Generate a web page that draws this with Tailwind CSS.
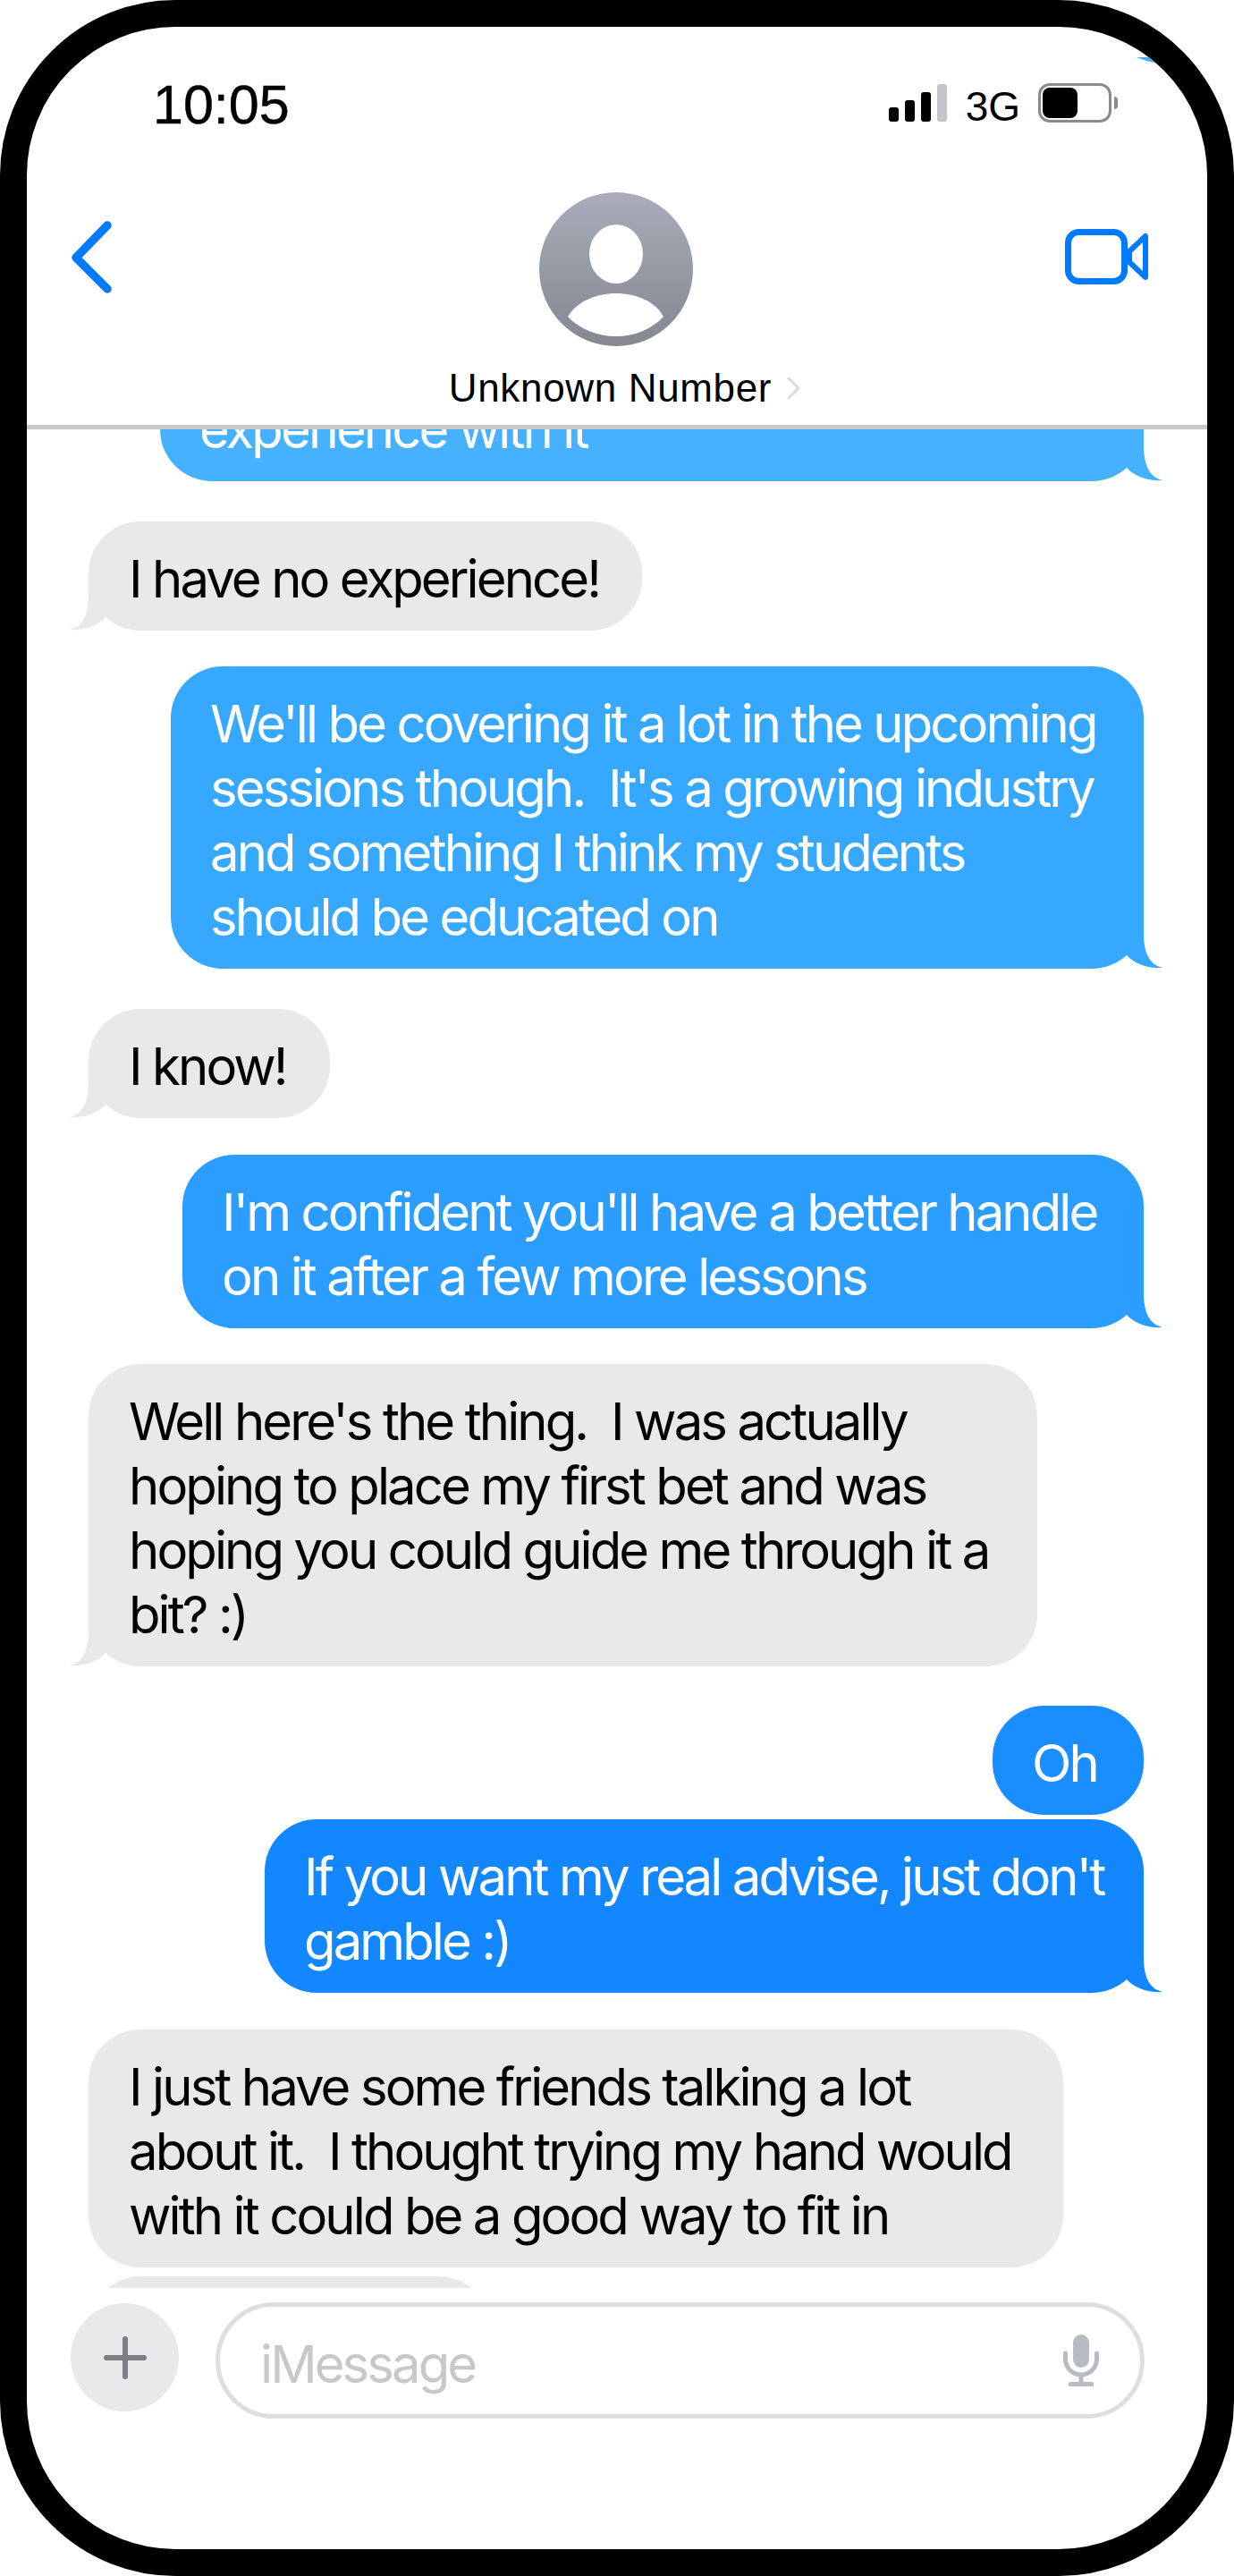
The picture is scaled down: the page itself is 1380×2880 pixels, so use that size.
<!DOCTYPE html>
<html lang="en">
  <head>
    <meta charset="UTF-8" />
    <title>Messages</title>
    <script src="https://cdn.jsdelivr.net/npm/@tailwindcss/browser@4"></script>
  </head>

  <body class="bg-white">
    <div class="relative w-[1380px] h-[2880px] border-[30px] border-black rounded-[196px] bg-white overflow-hidden flex flex-col font-['Inter',sans-serif] text-black">
      <!-- stray tail left over in the top corner -->
      <svg class="absolute left-[1241px] top-[34px] w-[29px] h-[6px]" viewBox="0 0 29 6"><path d="M0 0H29L20 6C13 5 6 2 0 0Z" fill="#45B1FF" /></svg>

      <!-- status bar -->
      <div class="h-[110px] pt-[52px] pl-[141px] pr-[100px] flex justify-between items-start shrink-0">
        <span class="font-['Liberation_Sans',sans-serif] text-[61px] leading-[70px] [-webkit-text-stroke:0.5px_black]">10:05</span>
        <div class="flex items-start">
          <div class="flex items-end gap-[7px] h-[42px] mt-[12px]">
            <div class="w-[11px] h-[16px] rounded-[3px] bg-black"></div>
            <div class="w-[11px] h-[24px] rounded-[3px] bg-black"></div>
            <div class="w-[11px] h-[33px] rounded-[3px] bg-black"></div>
            <div class="w-[11px] h-[42px] rounded-[3px] bg-[#c4c4c8]"></div>
          </div>
          <span class="font-['Liberation_Sans',sans-serif] text-[46px] leading-[52px] ml-[21px] mt-[11px]">3G</span>
          <div class="ml-[20px] mt-[11px] w-[82px] h-[44px] border-[3px] border-[#8a8a8a] rounded-[13px] p-[2px]">
            <div class="w-[39px] h-[34px] bg-black rounded-[8px]"></div>
          </div>
          <div class="ml-[3px] mt-[26px] w-[4px] h-[14px] bg-[#8a8a8a] rounded-r-full"></div>
        </div>
      </div>

      <!-- conversation header -->
      <div class="relative h-[335px] shrink-0 flex flex-col items-center">
        <svg class="absolute left-[47px] top-[105px] w-[52px] h-[86px]" viewBox="0 0 52 86" fill="none">
          <path d="M43 7L8 43L43 78" stroke="#007AFF" stroke-width="9.5" stroke-linecap="round" stroke-linejoin="round" />
        </svg>
        <svg class="mt-[75px] -ml-[2px] w-[172px] h-[172px]" viewBox="0 0 172 172">
          <defs>
            <linearGradient id="avatar" x1="0" y1="0" x2="0" y2="1">
              <stop offset="0" stop-color="#a9adb9" />
              <stop offset="1" stop-color="#858791" />
            </linearGradient>
          </defs>
          <circle cx="86" cy="86" r="86" fill="url(#avatar)" />
          <ellipse cx="86" cy="69" rx="30" ry="33" fill="#fff" />
          <path d="M32 139C42 122 64 113 86 113C108 113 130 122 139 139C126 153 107 161 86 161C65 161 45 153 32 139Z" fill="#fff" />
        </svg>
        <div class="mt-[22px] ml-[18px] flex items-center">
          <span class="font-['Liberation_Sans',sans-serif] text-[44px] leading-[50px] tracking-[0.015em]">Unknown Number</span>
          <svg class="ml-[16px] w-[17px] h-[28px]" viewBox="0 0 17 28" fill="none"><path d="M2 2L14 14L2 26" stroke="#dcdcdc" stroke-width="3" /></svg>
        </div>
        <svg class="absolute left-[1161px] top-[116px] w-[94px] h-[62px]" viewBox="0 0 94 62" fill="none" stroke="#007AFF" stroke-width="7" stroke-linejoin="round">
          <rect x="3.5" y="3.5" width="63" height="55" rx="12" />
          <path d="M72 25L90 8V54L72 37Z" stroke-width="6" />
        </svg>
      </div>

      <div class="h-[5px] bg-[#c8c8c8] shrink-0"></div>

      <!-- messages -->
      <div class="h-[2078px] shrink-0 overflow-hidden pl-[69px] pr-[71px] flex flex-col text-[58px] leading-[72px] tracking-[-0.05em]">
        <div class="relative self-end w-[1100px] -mt-[64px] pl-[44px] pt-[28px] pb-[22px] rounded-[58px] bg-[#45B1FF] text-white">
          <span class="whitespace-pre">experience with it</span>
          <svg class="absolute -right-[21px] bottom-0 w-[44px] h-[60px]" viewBox="0 0 44 60"><path d="M23 0V20C23 40 28 55 44 59C30 60 14 56 4 45L0 0Z" fill="#45B1FF" /></svg>
        </div>

        <div class="relative self-start w-[619px] mt-[45px] pl-[45px] pt-[28px] pb-[22px] rounded-[58px] bg-[#E9E9EB]">
          <span class="whitespace-pre">I have no experience!</span>
          <svg class="absolute -left-[21px] bottom-0 w-[44px] h-[60px] -scale-x-100" viewBox="0 0 44 60"><path d="M23 0V20C23 40 28 55 44 59C30 60 14 56 4 45L0 0Z" fill="#E9E9EB" /></svg>
        </div>

        <div class="relative self-end w-[1088px] mt-[40px] pl-[44px] pt-[28px] pb-[22px] rounded-[58px] bg-[#36A8FF] text-white">
          <span class="whitespace-pre">We'll be covering it a lot in the upcoming<br />sessions though.  It's a growing industry<br />and something I think my students<br />should be educated on</span>
          <svg class="absolute -right-[21px] bottom-0 w-[44px] h-[60px]" viewBox="0 0 44 60"><path d="M23 0V20C23 40 28 55 44 59C30 60 14 56 4 45L0 0Z" fill="#36A8FF" /></svg>
        </div>

        <div class="relative self-start w-[270px] mt-[45px] pl-[45px] pt-[28px] pb-[22px] rounded-[58px] bg-[#E9E9EB]">
          <span class="whitespace-pre">I know!</span>
          <svg class="absolute -left-[21px] bottom-0 w-[44px] h-[60px] -scale-x-100" viewBox="0 0 44 60"><path d="M23 0V20C23 40 28 55 44 59C30 60 14 56 4 45L0 0Z" fill="#E9E9EB" /></svg>
        </div>

        <div class="relative self-end w-[1075px] mt-[41px] pl-[44px] pt-[28px] pb-[22px] rounded-[58px] bg-[#2A9DFF] text-white">
          <span class="whitespace-pre">I'm confident you'll have a better handle<br />on it after a few more lessons</span>
          <svg class="absolute -right-[21px] bottom-0 w-[44px] h-[60px]" viewBox="0 0 44 60"><path d="M23 0V20C23 40 28 55 44 59C30 60 14 56 4 45L0 0Z" fill="#2A9DFF" /></svg>
        </div>

        <div class="relative self-start w-[1061px] mt-[40px] pl-[45px] pt-[28px] pb-[22px] rounded-[58px] bg-[#E9E9EB]">
          <span class="whitespace-pre">Well here's the thing.  I was actually<br />hoping to place my first bet and was<br />hoping you could guide me through it a<br />bit? :)</span>
          <svg class="absolute -left-[21px] bottom-0 w-[44px] h-[60px] -scale-x-100" viewBox="0 0 44 60"><path d="M23 0V20C23 40 28 55 44 59C30 60 14 56 4 45L0 0Z" fill="#E9E9EB" /></svg>
        </div>

        <div class="self-end w-[169px] mt-[44px] pl-[44px] pt-[28px] pb-[22px] rounded-[58px] bg-[#1A8DFF] text-white">
          <span class="whitespace-pre">Oh</span>
        </div>

        <div class="relative self-end w-[983px] mt-[5px] pl-[44px] pt-[28px] pb-[22px] rounded-[58px] bg-[#1287FF] text-white">
          <span class="whitespace-pre">If you want my real advise, just don't<br />gamble :)</span>
          <svg class="absolute -right-[21px] bottom-0 w-[44px] h-[60px]" viewBox="0 0 44 60"><path d="M23 0V20C23 40 28 55 44 59C30 60 14 56 4 45L0 0Z" fill="#1287FF" /></svg>
        </div>

        <div class="self-start w-[1090px] mt-[41px] pl-[45px] pt-[28px] pb-[22px] rounded-[58px] bg-[#E9E9EB]">
          <span class="whitespace-pre">I just have some friends talking a lot<br />about it.  I thought trying my hand would<br />with it could be a good way to fit in</span>
        </div>

        <div class="self-start w-[450px] h-[122px] shrink-0 mt-[10px] rounded-[58px] bg-[#E9E9EB]"></div>
      </div>

      <!-- composer -->
      <div class="flex items-start pl-[49px] pr-[70px] pt-[16px]">
        <div class="w-[121px] h-[121px] rounded-full bg-[#E9E9EB] flex items-center justify-center shrink-0 mt-[1px]">
          <svg class="w-[48px] h-[48px]" viewBox="0 0 48 48" stroke="#7E7F85" stroke-width="6" stroke-linecap="round"><path d="M3 24H45M24 3V45" /></svg>
        </div>
        <div class="ml-[41px] flex-1 h-[130px] border-[5px] border-[#DEDEDE] rounded-full pl-[45px] pr-[46px] flex items-center justify-between">
          <span class="text-[58px] leading-[72px] tracking-[-0.05em] text-[#C8C8CC] mt-[8px]">iMessage</span>
          <svg class="w-[40px] h-[58px]" viewBox="0 0 40 58" fill="none" stroke="#B8BAC4">
            <rect x="11" y="0" width="18" height="37" rx="9" fill="#B8BAC4" stroke="none" />
            <path d="M2.5 21V27C2.5 37 10 45 20 45C30 45 37.5 37 37.5 27V21" stroke-width="5" stroke-linecap="round" />
            <path d="M20 45V54" stroke-width="5" />
            <rect x="6" y="53" width="28" height="5" rx="1.5" fill="#B8BAC4" stroke="none" />
          </svg>
        </div>
      </div>
    </div>
  </body>
</html>
